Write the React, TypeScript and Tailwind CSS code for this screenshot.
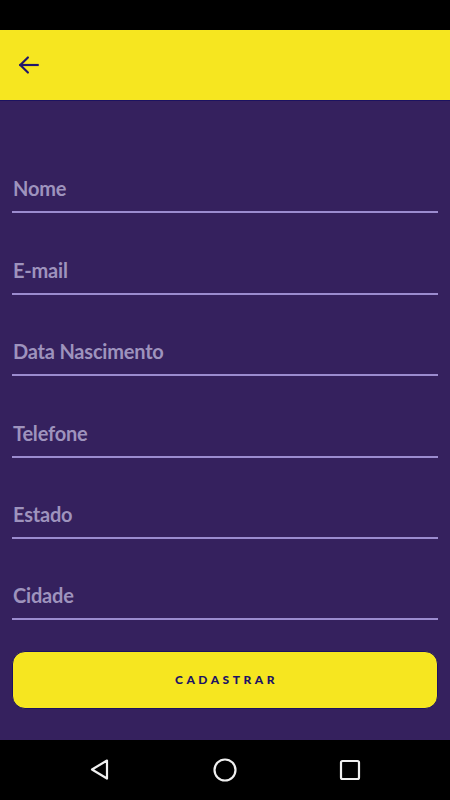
import React from "react";

const fields = ["Nome", "E-mail", "Data Nascimento", "Telefone", "Estado", "Cidade"];

export default function App() {
  return (
    <div className="w-[450px] h-[800px] flex flex-col bg-[#35215e]" style={{ fontFamily: "Lato, 'Open Sans', sans-serif" }}>
      <div className="h-[30px] shrink-0 bg-black" />
      <div className="h-[71px] shrink-0 bg-[#f6e620] border-b border-[#1c1260] flex items-center px-[16px]">
        <svg width="26" height="26" viewBox="0 0 24 24" fill="none" stroke="#22166b" strokeWidth="2" strokeLinecap="square">
          <path d="M20 12H4" />
          <path d="M11 5l-7 7 7 7" strokeLinecap="round" strokeLinejoin="miter" />
        </svg>
      </div>
      <div className="flex-1 flex flex-col px-[12px] pt-[31px]">
        {fields.map((f) => (
          <div key={f} className="h-[81.4px] shrink-0 flex flex-col justify-end">
            <div className="text-[20px] font-bold text-[#9e93bd] leading-none pb-[13px] pl-[1px] tracking-[-0.2px]">{f}</div>
            <div className="h-[2px] bg-[#9b8ccf]" />
          </div>
        ))}
        <button className="mt-[31px] h-[58px] shrink-0 w-full rounded-[13px] bg-[#f6e620] border border-[#1c1260] text-[#1c1464] text-[12px] font-black tracking-[3.5px] flex items-center justify-center pl-[3px]">
          CADASTRAR
        </button>
      </div>
      <div className="h-[60px] shrink-0 bg-black flex items-center justify-between px-[88px]">
        <svg width="24" height="24" viewBox="0 0 24 24" fill="none" stroke="#f0f0f0" strokeWidth="2.2" strokeLinejoin="round">
          <path d="M19 2.5L4 11.5L19 20.5Z" />
        </svg>
        <svg width="26" height="26" viewBox="0 0 26 26" fill="none" stroke="#f0f0f0" strokeWidth="2.2">
          <circle cx="13" cy="13" r="10.5" />
        </svg>
        <svg width="24" height="24" viewBox="0 0 24 24" fill="none" stroke="#f0f0f0" strokeWidth="2.2">
          <rect x="3" y="3" width="18" height="18" rx="1.5" />
        </svg>
      </div>
    </div>
  );
}
